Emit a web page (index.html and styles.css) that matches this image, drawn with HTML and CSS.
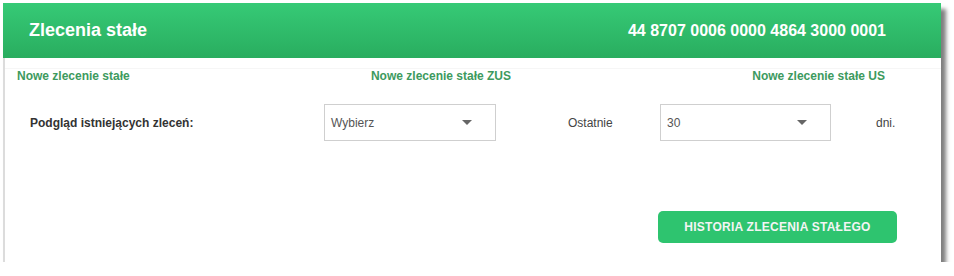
FILE: index.html
```html
<!DOCTYPE html>
<html lang="pl">
<head>
    <meta charset="UTF-8">
    <title>Zlecenia stałe</title>
    <link rel="stylesheet" href="styles.css">
</head>
<body>
    <div class="panel">
        <div class="panel-header">
            <h1 class="title">Zlecenia stałe</h1>
            <span class="account">44 8707 0006 0000 4864 3000 0001</span>
        </div>
        <div class="links">
            <a href="#" class="link">Nowe zlecenie stałe</a>
            <a href="#" class="link">Nowe zlecenie stałe ZUS</a>
            <a href="#" class="link">Nowe zlecenie stałe US</a>
        </div>
        <div class="filter-row">
            <label class="filter-label">Podgląd istniejących zleceń:</label>
            <div class="select select-type">
                <span>Wybierz</span>
                <span class="caret"></span>
            </div>
            <span class="text-last">Ostatnie</span>
            <div class="select select-days">
                <span>30</span>
                <span class="caret"></span>
            </div>
            <span class="text-days">dni.</span>
        </div>
        <div class="actions">
            <button type="button" class="btn">HISTORIA ZLECENIA STAŁEGO</button>
        </div>
    </div>
</body>
</html>
```

FILE: styles.css
```css
body {
    margin: 0;
    background: #fff;
    font-family: Arial, "Liberation Sans", sans-serif;
}
.panel {
    margin: 3px 0 0 3px;
    width: 936px;
    height: 259px;
    background: #fff;
    border-left: 2px solid #dcdcdc;
    box-shadow: 5px 6px 4px rgba(0, 0, 0, 0.5);
    display: flex;
    flex-direction: column;
}
.panel-header {
    height: 55px;
    margin-left: -2px;
    background: linear-gradient(#36ca76, #29ad5f);
    display: flex;
    align-items: center;
    justify-content: space-between;
    padding: 0 55px 0 26px;
}
.title {
    margin: 0;
    color: #fff;
    font-size: 18px;
    font-weight: bold;
}
.account {
    color: #fff;
    font-size: 16px;
    font-weight: bold;
}
.links {
    display: flex;
    justify-content: space-between;
    padding: 0 56px 0 12px;
    border-top: 1px solid #f6f6f6;
    margin-top: 10px;
}
.link {
    color: #3d9a5e;
    font-size: 12px;
    font-weight: bold;
    text-decoration: none;
}
.filter-row {
    display: flex;
    align-items: center;
    margin-top: 21px;
    padding-left: 25px;
    font-size: 12px;
    color: #333;
}
.filter-label {
    font-weight: bold;
    width: 294px;
}
.select {
    box-sizing: border-box;
    height: 37px;
    border: 1px solid #cfcfcf;
    display: flex;
    align-items: center;
    justify-content: space-between;
    padding: 0 23px 0 6px;
    color: #555;
}
.select-type {
    width: 172px;
}
.select-days {
    width: 171px;
}
.caret {
    width: 0;
    height: 0;
    border-left: 5px solid transparent;
    border-right: 5px solid transparent;
    border-top: 5px solid #666;
}
.text-last {
    margin-left: 72px;
    width: 92px;
    color: #444;
}
.text-days {
    margin-left: 45px;
    color: #444;
}
.actions {
    display: flex;
    justify-content: flex-end;
    margin-top: 70px;
    padding-right: 44px;
}
.btn {
    width: 239px;
    height: 32px;
    background: #2ec46f;
    color: #f4f4f4;
    border: none;
    border-radius: 5px;
    font-family: Arial, "Liberation Sans", sans-serif;
    font-size: 12px;
    font-weight: bold;
    letter-spacing: 0.25px;
    cursor: pointer;
}
```
